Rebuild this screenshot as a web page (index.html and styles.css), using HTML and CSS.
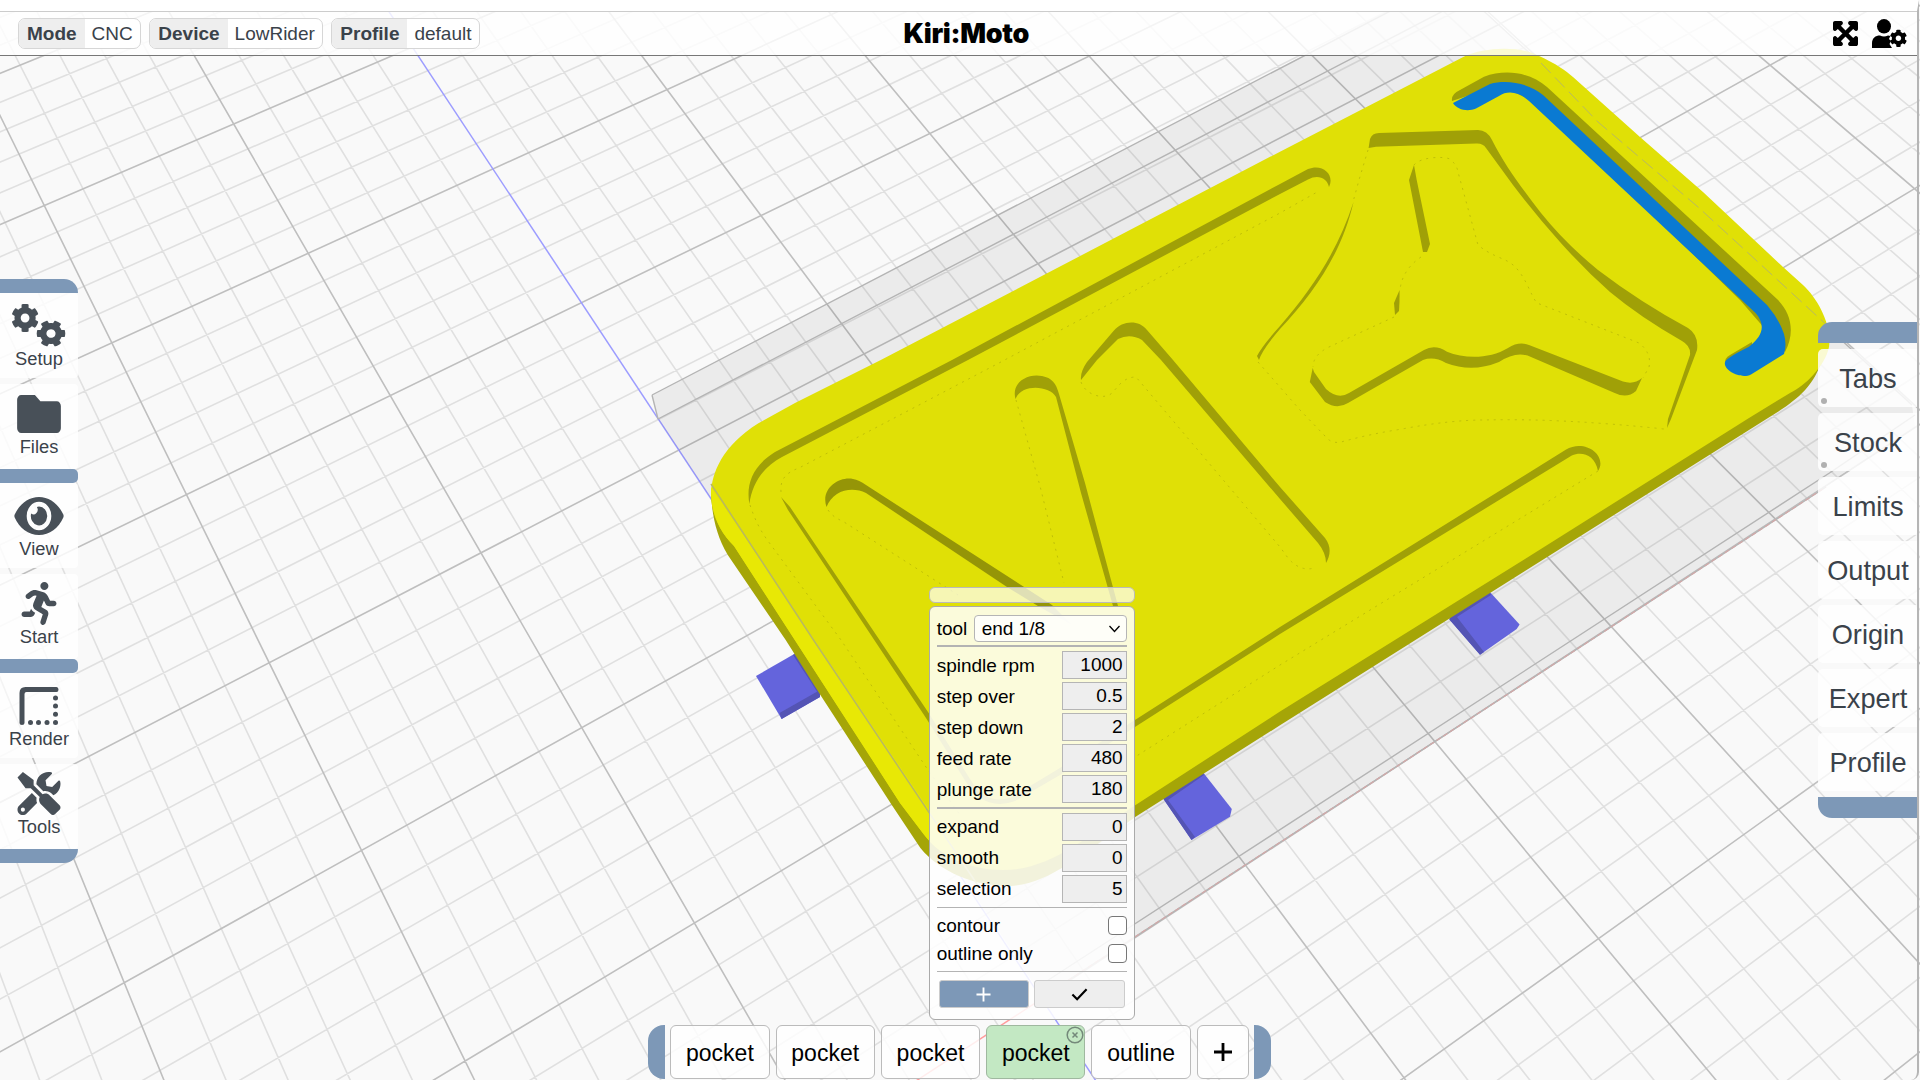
FILE: index.html
```html
<!DOCTYPE html>
<html lang="en">
<head>
<meta charset="utf-8">
<title>Kiri:Moto</title>
<link rel="stylesheet" href="styles.css">
</head>
<body>
<svg class="defs" aria-hidden="true">
  <defs>
    <path id="cog" d="M487.4 315.7l-42.6-24.6c4.3-23.2 4.3-47 0-70.2l42.6-24.6c4.9-2.8 7.1-8.6 5.5-14-11.1-35.6-30-67.8-54.7-94.6-3.8-4.1-10-5.1-14.8-2.3L380.8 110c-17.9-15.4-38.5-27.3-60.8-35.1V25.8c0-5.6-3.9-10.5-9.4-11.7-36.7-8.2-74.3-7.8-109.2 0-5.5 1.2-9.4 6.1-9.4 11.7V75c-22.2 7.9-42.8 19.8-60.8 35.1L88.7 85.5c-4.9-2.8-11-1.9-14.8 2.3-24.7 26.7-43.6 58.9-54.7 94.6-1.7 5.4.6 11.2 5.5 14L67.3 221c-4.3 23.2-4.3 47 0 70.2l-42.6 24.6c-4.9 2.8-7.1 8.6-5.5 14 11.1 35.6 30 67.8 54.7 94.6 3.8 4.1 10 5.1 14.8 2.3l42.6-24.6c17.9 15.4 38.5 27.3 60.8 35.1v49.2c0 5.6 3.9 10.5 9.4 11.7 36.7 8.2 74.3 7.8 109.2 0 5.5-1.2 9.4-6.1 9.4-11.7v-49.2c22.2-7.9 42.8-19.8 60.8-35.1l42.6 24.6c4.9 2.8 11 1.9 14.8-2.3 24.7-26.7 43.6-58.9 54.7-94.6 1.5-5.5-.7-11.3-5.6-14.1zM256 336c-44.1 0-80-35.9-80-80s35.9-80 80-80 80 35.9 80 80-35.9 80-80 80z"/>
  </defs>
</svg>

<svg class="scene" viewBox="0 0 1920 1080">
  <g id="grid">
    <path id="grid-minor" class="grid-minor"/>
    <path id="grid-major" class="grid-major"/>
    <path id="axis-y" class="axis-y"/>
    <path id="axis-x" class="axis-x"/>
  </g>

  <g class="stock">
    <path class="stock-fill" d="M652 395L1450 -20L1912 405L1915 427L1043 998L658 419Z"/>
    <path class="stock-edge" d="M658 419L1470 -3M652 395L658 419M652 395L1450 -20L1912 405M1043.7 983L1831 472L1915 415M1041 998L1826 487"/>
    <path class="stock-front" d="M1041 998L1826 487"/>
  </g>

  <g class="tab">
    <path d="M796 653L820 690L820 697L781.6 719L756 676Z"/>
    <path d="M1202 771L1231.800 809L1230 816.700L1191.500 840L1162.800 798Z"/>
    <path d="M1489 591L1519.600 624.400L1516.700 629L1480 654.700L1449.400 619.600Z"/>
  </g>
  <g class="tab-side">
    <path d="M820 690L820 697L781.600 719L779.500 713Z"/>
    <path d="M796 653L820 690L818 693L793 655Z"/>
    <path d="M1163 794L1202 771L1204 775L1168 800L1195 837L1191.500 840L1162.800 798Z"/>
    <path d="M1449.400 617L1489 591L1491 595L1457 617L1484 652L1480 654.700L1449.400 619.600Z"/>
  </g>

  <path class="side" d="M711 493C712 515 716 535 727.800 555L785.700 640L820.400 695L891.800 805L920.400 848C940 872 975 886 1006 886C1045 886 1075 860 1135.600 816.700L1280 725.300L1525 571L1776 413C1800 398 1812 385 1819 368L1825 350L1400 100Z"/>
  <path class="top" d="M711 493C712 473 722 446 758.400 423.300L795 403L880.800 360L1280 151.700L1463.700 56.700C1485 47 1518 46 1537 55C1557 64 1566 71 1573 77L1640 137L1703 192L1783 267L1803 285C1818 299 1832 325 1829 347C1825 366 1805 386 1790 393L1749 418L1525 559L1280 711.500L1135.600 805C1085 838 1050 870 1003 870C965 870 938 853 922 832L900 803L870 756L734 546C718 530 711 512 711 493Z"/>
  <path class="lip" d="M711 487L965 863C945 857 932 846 922 832L900 803L734 546C718 530 711 512 711 487Z"/>

  <g class="edge-lines">
    <path class="stock-line" d="M711 484L813.500 640L985 896"/>
    <path class="stock-line thin-dash" d="M1541 63L1598 122L1698 207L1830 328"/>
  </g>

  <g class="hidden-edges">
    <path d="M781 492C780 480 785 473 799 468L999 363L1280 213L1319 191"/>
    <path d="M750 505C755 520 760 530 768 541L841 640L928 770L960 815"/>
    <path d="M1598 471L1280 665L1135 757"/>
    <path d="M828 510C833 517 838 519 844 522L958 595"/>
    <path d="M1016 400L1040 486L1064 583"/>
    <path d="M1081 382C1086 396 1105 400 1112 393L1121 383Q1128 377 1136 377L1280 547L1288 558Q1300 572 1314 568"/>
    <path d="M1368 150L1359 180L1353 202"/>
    <path d="M1258 362L1300 410L1325 436Q1331 444 1341 442Q1370 434 1402 429Q1450 420 1484 420Q1560 418 1664 429"/>
    <path d="M1414 165C1420 157 1443 156 1450 159Q1457 165 1458 172L1478 245C1490 255 1500 257 1509 262C1525 272 1530 295 1537 303L1639 343Q1652 353 1649 367L1643 378"/>
    <path d="M1421 257Q1402 270 1400 290M1394 317L1329 347Q1313 355 1313 367"/>
  </g>

  <g class="wall">
    <path d="M749.400 504C746 485 752 466 775 452L952 360L1280 184L1308 169C1323 163 1335 175 1329 187C1327 178 1318 174 1308 179.500L1280 194L968 360L782 457C762 468 752 484 749.400 504Z"/>
    <path d="M781 497L790 507L928 712L970 779Q985 805 1010 798L1060 768L1280 627L1565.700 449.800C1585 438 1608 456 1598 471C1595 455 1582 451 1571.800 455.600L1280 634L1060 775L1015 801Q985 812 966 782L926 718L788 510Z"/>
    <path d="M1015.500 399C1011 383 1027 373 1042 376C1052 378 1056 383 1059 394L1085 483L1118 606L1113 606L1081 493L1056 397C1050 386 1022 383 1015.500 399Z"/>
    <path d="M1081 380Q1080 372 1087 362L1113.500 331C1123 320 1139 320 1147 330L1173 360L1280 487L1325 538C1332 547 1330 556 1326 563Q1326 553 1318 543L1280 499L1161 360L1142 340Q1130 333 1118 339L1097 360Z"/>
    <path d="M1368.600 148L1370 139Q1372 133 1379 133L1478 130Q1487 130 1492 140C1505 166 1522 188 1541 213Q1565 243 1598 270Q1640 302 1688 328Q1699 335 1697 350L1671 419L1667 428L1668 419L1690 355Q1691 346 1682 341Q1640 317 1610 292Q1585 270 1560 242Q1535 214 1513 185L1486 148Q1483 143 1476 143.500L1376 146.700Z"/>
    <path d="M1353.500 202C1342 252 1315 292 1280 329Q1262 350 1259 360L1257 356Q1262 346 1280 326C1313 288 1338 250 1353.500 202Z"/>
    <path d="M1414 165L1409 180L1423 252L1427 252L1430 244L1416.700 180Z"/>
    <path d="M1399.600 290L1394 303L1395 315L1399 311L1399.500 302Z"/>
    <path d="M1312.700 368L1309.800 382L1325 402Q1337 410 1348 403L1423 360Q1434 356 1446 363Q1472 373 1499 362Q1517 350 1531 357L1614.700 393Q1627 399 1636 391L1642 378Q1634 385 1623 381.500L1529 345Q1519 341 1508 348C1490 359 1465 359 1447 351.700Q1435 344 1424 350L1349 393Q1338 400 1326 389L1314 372Z"/>
    <path d="M1452 101Q1451 94 1460 90L1484 76.700C1505 69 1530 72 1547 87L1777 299C1792 314 1795 333 1785 352L1740 300L1540 105L1500 85Z"/>
    <path d="M1725.500 364Q1724 358 1730 355L1752 342L1752 352Z"/>
  </g>
  <path class="wall-deep" d="M826.500 507C820 488 840 476 853 479Q859 480 866 485L1052 605L1072 625L1038 606L1007 587L866 493C852 486 833 490 826.500 507Z"/>
  <path class="selected-face" d="M1453 103L1490 84C1508 79 1530 84 1543 95L1767 305Q1779 319 1784 334Q1787 345 1784 354L1751 374.500C1740 380 1721 369 1725.500 361Q1728 357 1749 346.700C1763 336 1766 325 1755.500 313L1529 101C1519 92 1508 90 1499 96L1476 108.500C1468 112 1457 110 1453 103Z"/>
</svg>

<div class="app">
  <header class="topbar">
    <div class="settings">
      <div class="pill"><b class="pill-label">Mode</b><span class="pill-value">CNC</span></div>
      <div class="pill"><b class="pill-label">Device</b><span class="pill-value">LowRider</span></div>
      <div class="pill"><b class="pill-label">Profile</b><span class="pill-value">default</span></div>
    </div>
    <h1 class="brand">Kiri:Moto</h1>
    <div class="actions">
      <svg class="icon-expand" viewBox="-14 18 476 476" preserveAspectRatio="none"><path d="M448 344v112a23.940 23.940 0 0 1-24 24H312c-21.390 0-32.090-25.900-17-41l36.200-36.200L224 295.600 116.770 402.900 153 439c15.090 15.100 4.390 41-17 41H24a23.940 23.940 0 0 1-24-24V344c0-21.400 25.890-32.100 41-17l36.190 36.200L184.460 256 77.180 148.700 41 185c-15.100 15.100-41 4.400-41-17V56a23.940 23.940 0 0 1 24-24h112c21.390 0 32.090 25.900 17 41l-36.200 36.200L224 216.400l107.230-107.300L295 73c-15.090-15.100-4.390-41 17-41h112a23.940 23.940 0 0 1 24 24v112c0 21.400-25.890 32.100-41 17l-36.190-36.200L263.540 256l107.280 107.300L407 327.100c15.100-15.200 41-4.500 41 16.900z"/></svg>
      <svg class="icon-user" viewBox="0 0 35 29">
        <ellipse cx="12" cy="7.300" rx="7" ry="7.200"/>
        <path d="M0 29V24.500C0 19 3.500 16.500 8 16.500Q12 18.300 16 16.500Q17.500 16.500 18.300 17L17 20L19 22L17.500 25L20 29Z"/>
        <g transform="translate(17.600 10.500) scale(.0345)"><use href="#cog"/></g>
      </svg>
    </div>
  </header>

  <main class="workspace">
    <nav class="menu menu-left">
      <i class="rail rail-top"></i>
      <a class="tool"><svg viewBox="0 0 54 43"><g transform="translate(-1 -.5) scale(.055 .0565)"><use href="#cog"/></g><g transform="translate(39 29.500) scale(1.020 .96) rotate(30) scale(.0565) translate(-256 -256)"><use href="#cog"/></g></svg>Setup</a>
      <a class="tool"><svg class="wide" viewBox="-60 64 632 384" preserveAspectRatio="none"><path d="M464 128H272l-64-64H48C21.490 64 0 85.490 0 112v288c0 26.510 21.490 48 48 48h416c26.510 0 48-21.490 48-48V176c0-26.510-21.490-48-48-48z"/></svg>Files</a>
      <i class="rail"></i>
      <a class="tool"><svg class="wide" viewBox="-28 64 632 384" preserveAspectRatio="none"><path d="M572.520 241.400C518.290 135.590 410.930 64 288 64S57.680 135.640 3.480 241.410a32.350 32.350 0 0 0 0 29.190C57.710 376.410 165.070 448 288 448s230.320-71.640 284.520-177.410a32.350 32.350 0 0 0 0-29.190zM288 400a144 144 0 1 1 144-144 143.930 143.930 0 0 1-144 144zm0-240a95.310 95.310 0 0 0-25.310 3.790 47.850 47.850 0 0 1-66.900 66.900A95.780 95.780 0 1 0 288 160z"/></svg>View</a>
      <a class="tool"><svg viewBox="0 0 416 512"><path d="M272 96c26.510 0 48-21.490 48-48S298.510 0 272 0s-48 21.490-48 48 21.490 48 48 48zM113.690 317.470l-14.800 34.520H32c-17.670 0-32 14.330-32 32s14.330 32 32 32h77.450c19.250 0 36.580-11.440 44.110-29.090l8.790-20.520-10.670-6.300c-17.320-10.230-30.060-25.370-37.990-42.610zM384 223.990h-44.030l-26.060-53.250c-12.500-25.550-35.450-44.230-61.780-50.940l-71.080-21.140c-28.300-6.800-57.770-.55-80.840 17.140l-39.670 30.410c-14.030 10.750-16.690 30.830-5.940 44.860s30.840 16.690 44.860 5.940l39.670-30.410c7.670-5.890 17.440-8 25.270-6.140l14.700 4.370-37.460 87.390c-12.620 29.480-1.310 64.010 26.300 80.310l84.980 50.170-27.470 87.730c-5.280 16.860 4.110 34.820 20.970 40.090 3.190 1 6.410 1.480 9.580 1.480 13.610 0 26.230-8.770 30.520-22.450l31.640-101.060c5.910-20.770-2.890-43.080-21.640-54.390l-61.240-36.140 31.310-78.280 20.270 41.430c8 16.340 24.920 26.890 43.110 26.890H384c17.670 0 32-14.330 32-32s-14.330-31.990-32-31.990z"/></svg>Start</a>
      <i class="rail"></i>
      <a class="tool"><svg class="wide" viewBox="0 0 39 38"><path d="M0 36V6Q0 0 6 0H37Q39 0 39 2.500T37 5H7Q5 5 5 7V36Q5 38 2.500 38T0 36Z"/><g><circle cx="11" cy="35.500" r="2.500"/><circle cx="19" cy="35.500" r="2.500"/><circle cx="27.500" cy="35.500" r="2.500"/><circle cx="36" cy="35.500" r="2.500"/><circle cx="36" cy="27.300" r="2.500"/><circle cx="36" cy="19" r="2.500"/><circle cx="36" cy="11" r="2.500"/></g></svg>Render</a>
      <a class="tool"><svg viewBox="0 0 512 512"><path d="M501.100 395.700L384 278.600c-23.100-23.100-57.600-27.600-85.400-13.900L192 158.100V96L64 0 0 64l96 128h62.100l106.600 106.600c-13.600 27.800-9.200 62.300 13.900 85.400l117.100 117.100c14.600 14.600 38.200 14.600 52.700 0l52.700-52.700c14.500-14.600 14.500-38.200 0-52.700zM331.700 225c28.300 0 54.900 11 74.900 31l19.400 19.400c15.800-6.900 30.800-16.500 43.800-29.500 37.100-37.100 49.700-89.300 37.900-136.700-2.200-9-13.500-12.100-20.100-5.500l-74.400 74.400-67.900-11.300L334 98.900l74.400-74.400c6.600-6.600 3.400-17.900-5.700-20.200-47.400-11.700-99.600.9-136.600 37.900-28.500 28.500-41.900 66.100-41.200 103.600l82.100 82.100c8.100-1.900 16.500-2.900 24.700-2.900zm-103.900 82l-56.700-56.700L18.700 402.800c-25 25-25 65.500 0 90.500s65.500 25 90.500 0l123.600-123.600c-7.600-19.900-9.900-41.600-5-62.700zM64 472c-13.200 0-24-10.800-24-24 0-13.300 10.700-24 24-24s24 10.700 24 24c0 13.200-10.700 24-24 24z"/></svg>Tools</a>
      <i class="rail rail-bottom"></i>
    </nav>

    <section class="ops">
      <i class="cap cap-left"></i>
      <div class="op">pocket</div>
      <div class="op">pocket</div>
      <div class="op">pocket</div>
      <div class="op active">pocket
        <svg class="op-close" viewBox="0 0 18 18"><circle cx="9" cy="9" r="7.800"/><path d="M6.500 6.500l5 5m0-5l-5 5"/></svg>
        <div class="popup">
          <div class="grip"></div>
          <form class="panel">
            <div class="row row-tool"><label>tool</label><div class="select">end 1/8<svg viewBox="0 0 12 8"><path d="M1 1l5 5.500L11 1"/></svg></div></div>
            <hr class="first">
            <div class="row"><label>spindle rpm</label><span class="num">1000</span></div>
            <div class="row"><label>step over</label><span class="num">0.5</span></div>
            <div class="row"><label>step down</label><span class="num">2</span></div>
            <div class="row"><label>feed rate</label><span class="num">480</span></div>
            <div class="row"><label>plunge rate</label><span class="num">180</span></div>
            <hr>
            <div class="row"><label>expand</label><span class="num">0</span></div>
            <div class="row"><label>smooth</label><span class="num">0</span></div>
            <div class="row"><label>selection</label><span class="num">5</span></div>
            <hr>
            <div class="row row-check"><label>contour</label><span class="check"></span></div>
            <div class="row row-check"><label>outline only</label><span class="check"></span></div>
            <hr>
            <div class="buttons">
              <div class="btn btn-add"><svg viewBox="0 0 16 16"><path d="M8 .5v15M.5 8h15"/></svg></div>
              <div class="btn"><svg viewBox="0 0 18 14"><path d="M1.500 7l5 5L16.500 1.500"/></svg></div>
            </div>
          </form>
        </div>
      </div>
      <div class="op">outline</div>
      <div class="op op-add"><svg viewBox="0 0 18 18"><path d="M9 0v18M0 9h18"/></svg></div>
      <i class="cap cap-right"></i>
    </section>

    <nav class="menu menu-right">
      <i class="rail rail-top"></i>
      <a class="tab-item pinned">Tabs</a>
      <a class="tab-item pinned">Stock</a>
      <a class="tab-item">Limits</a>
      <a class="tab-item">Output</a>
      <a class="tab-item">Origin</a>
      <a class="tab-item">Expert</a>
      <a class="tab-item">Profile</a>
      <i class="rail rail-bottom"></i>
    </nav>
  </main>
</div>
<script src="grid.js"></script>
</body>
</html>
```

FILE: styles.css
```css
* { box-sizing: border-box; }

body {
  margin: 0;
  width: 1920px;
  height: 1080px;
  overflow: hidden;
  position: relative;
  background: #f9f9f9;
  font-family: "Liberation Sans", Arial, sans-serif;
  color: #3a424a;
}

.defs { position: absolute; width: 0; height: 0; }

/* 3D view */
.scene { position: absolute; inset: 0; width: 1920px; height: 1080px; }
.grid-minor { fill: none; stroke: #e0e0e0; stroke-width: 1.6; }
.grid-major { fill: none; stroke: #bfbfbf; stroke-width: 1.6; }
.axis-y { fill: none; stroke: #9c9cff; stroke-width: 1.5; }
.axis-x { fill: none; stroke: #ff9c9c; stroke-width: 1.5; }
.stock-fill { fill: rgba(0, 0, 0, .055); }
.stock-edge { fill: none; stroke: #b4b4b4; stroke-width: 1.4; }
.stock-front { fill: none; stroke: #d4a8a8; stroke-width: 1.2; stroke-dasharray: 5 3; }
.tab { fill: #6464dc; }
.tab-side { fill: #5454b4; }
.side { fill: #a5a507; }
.top { fill: #e0e006; }
.lip { fill: #e8e805; }
.stock-line { fill: none; stroke: #b9b960; stroke-width: 1.5; }
.thin-dash { stroke-width: 1; stroke-dasharray: 14 6; }
.hidden-edges { fill: none; stroke: #c0c006; stroke-width: 1; stroke-dasharray: 2 5; }
.wall { fill: #a0a007; }
.wall-deep { fill: #959507; }
.selected-face { fill: #0a7ad2; }

/* shell */
.app {
  position: relative;
  height: 1080px;
  width: 1919px;
  display: flex;
  flex-direction: column;
  border-top: 11px solid #fff;
  border-right: 2px solid #b5b5b5;
  border-bottom-right-radius: 8px;
}

.topbar {
  height: 45px;
  flex: none;
  display: grid;
  grid-template-columns: 1fr auto 1fr;
  align-items: center;
  padding: 0 10px 0 18px;
  background: rgba(255, 255, 255, .82);
  border-top: 1px solid #ccc;
  border-bottom: 1px solid #777;
}
.settings { display: flex; gap: 8.500px; font-size: 19px; line-height: 29px; }
.pill { display: flex; border: 1px solid #d6d6d6; border-radius: 7px; overflow: hidden; background: #fff; }
.pill-label { padding: 0 8px; background: #eee; }
.pill-value { padding: 0 7px 0 7px; }
.brand {
  margin: 0 0 0 4px;
  width: 122px;
  color: #000;
  font: 900 27px/40px Inter, sans-serif;
  letter-spacing: -.3px;
  white-space: nowrap;
}
.actions { display: flex; justify-content: flex-end; align-items: center; gap: 14px; }
.icon-expand { width: 25px; height: 25px; stroke: #000; stroke-width: 28; }
.icon-user { width: 35px; height: 29px; }

.workspace { flex: 1; display: flex; justify-content: space-between; align-items: flex-start; }

.rail { display: block; height: 14px; background: #7d98b7; border-radius: 0 5px 5px 0; }
.menu { display: flex; flex-direction: column; }

.menu-left { width: 78px; margin-top: 223px; }
.menu-left .rail-top { border-radius: 0 15px 0 0; }
.menu-left .rail-bottom { border-radius: 0 0 15px 0; }
.tool {
  height: 85px;
  display: flex;
  flex-direction: column;
  align-items: center;
  justify-content: flex-end;
  padding-bottom: 9px;
  gap: 3px;
  font-size: 18.300px;
  line-height: 21px;
  background: rgba(255, 255, 255, .82);
  border-radius: 0 4px 4px 0;
}
.tool svg { width: 54px; height: 43px; fill: #485058; margin-bottom: -2px; }
.tool .wide { height: 38px; margin-bottom: 0; }
.tool + .tool { margin-top: 6px; padding-bottom: 12px; }

.menu-right { width: 99px; margin-top: 266px; gap: 6px; }
.menu-right .rail { height: 21px; }
.menu-right .rail-top { border-radius: 14px 0 0 0; }
.menu-right .rail-bottom { border-radius: 0 0 0 14px; }
.tab-item {
  height: 58px;
  padding-left: 1px;
  line-height: 60px;
  text-align: center;
  font-size: 27.200px;
  background: rgba(255, 255, 255, .82);
  border-radius: 5px 0 0 5px;
  position: relative;
}
.pinned::after {
  content: "";
  position: absolute;
  left: 3px;
  bottom: 3px;
  width: 6px;
  height: 6px;
  border-radius: 50%;
  background: #b0b0b0;
}

/* operation strip */
.ops { align-self: flex-end; display: flex; gap: 6px; height: 54px; margin: 0 0 1px 23px; color: #000; }
.cap { width: 17px; background: #7d98b7; }
.cap-left { border-radius: 16px 0 0 16px; margin-right: -1px; }
.cap-right { border-radius: 0 16px 16px 0; margin-left: -1px; }
.op {
  width: 99.300px;
  font-size: 23px;
  line-height: 54px;
  text-align: center;
  background: rgba(255, 255, 255, .82);
  border: 1.500px solid #bbb;
  border-radius: 6px;
  position: relative;
}
.op-add { width: 52px; display: flex; align-items: center; justify-content: center; }
.op-add svg { width: 18px; height: 18px; stroke: #000; stroke-width: 2.800; }
.active { background: #c3e8c3; border-color: #9fb89f; }
.op-close { position: absolute; right: 0; top: 0; width: 18px; height: 18px; fill: none; stroke: #74897a; stroke-width: 1.500; }

.popup {
  position: absolute;
  left: -58.500px;
  bottom: 58px;
  width: 206px;
  text-align: left;
  font-size: 19px;
}
.grip { height: 16px; margin-bottom: 3px; border: 1.500px solid #bbb; border-radius: 6px; background: rgba(255, 255, 255, .7); }
.panel {
  height: 414px;
  padding: 8px 7px 0;
  border: 1.500px solid #aaa;
  border-radius: 6px;
  background: rgba(255, 255, 255, .86);
}
.row { display: flex; justify-content: space-between; align-items: center; height: 28px; line-height: 29px; margin-bottom: 3px; }
.row-tool { margin-bottom: 3px; height: 27px; }
.select {
  width: 153px;
  height: 27px;
  padding: 0 5px 0 7px;
  display: flex;
  align-items: center;
  justify-content: space-between;
  border: 1px solid #b5b5b5;
  border-radius: 4px;
  background: rgba(255, 255, 255, .8);
}
.select svg { width: 13px; height: 8px; fill: none; stroke: #000; stroke-width: 1.300; }
.panel hr { margin: 4px 0; border: 0; height: 1.500px; background: #b3b3b3; }
.panel .first { margin: 0 0 4.500px; }
.num {
  width: 65px;
  height: 28px;
  line-height: 25px;
  padding-right: 3px;
  text-align: right;
  border: 1.500px solid #b5b5b5;
  background: #eee;
}
.row-check { height: 19px; margin: 8px 0 7.500px; }
.row-check + .row-check { margin-top: 9px; }
.check { width: 19px; height: 19px; border: 1.500px solid #777; border-radius: 4px; background: #fff; }
.buttons { display: flex; gap: 5px; padding: 4px 2px 0; }
.btn { flex: 1; height: 28px; display: flex; align-items: center; justify-content: center; background: #eee; border: 1px solid #ccc; border-radius: 3px; }
.btn svg { width: 17px; height: 15px; fill: none; stroke: #000; stroke-width: 2.300; }
.btn-add { background: #7d98b7; }
.btn-add svg { stroke: #fff; stroke-width: 2; }
```

FILE: grid.js
```js
// Ground plane calibration: [u, v, screen x, screen y], one unit = one major cell.
const calibration = [
  [-2, 6, 44, 205.3], [-2, 5, 112.7, 343], [-2, 4, 186.7, 494.5], [-2, 3, 269.3, 662.5],
  [-2, 2, 361.2, 850], [-2, 1, 465.3, 1061.7], [-1, 6, 233.5, 124], [-1, 5, 308.2, 253.3],
  [-1, 2, 581.6, 727.3], [-1, 1, 695, 923.3], [0, 5, 493, 169.3], [0, 4, 580.4, 303.3],
  [1, 5, 666.5, 89.3], [1, 4, 760.8, 215], [2, 4, 929.8, 133.3], [3, 4, 1089, 56.7],
  [1, 3, 864.5, 354], [2, 3, 1038.8, 263.3], [3, 3, 1202.4, 179],
  [1, 0, 1243.8, 865.7], [2, 0, 1435, 741.5], [3, 0, 1610.6, 626], [4, 0, 1774.7, 518.7],
  [2, -1, 1599.5, 938.3], [3, -1, 1778.9, 810]
];

// Least-squares fit of the eight projection coefficients.
function fitProjection(points) {
  const m = Array.from({ length: 8 }, () => new Array(9).fill(0));
  const add = (row, value) => {
    for (let i = 0; i < 8; i++) {
      for (let j = 0; j < 8; j++) m[i][j] += row[i] * row[j];
      m[i][8] += row[i] * value;
    }
  };
  for (const [u, v, px, py] of points) {
    const x = px / 1000, y = py / 1000;
    add([u, v, 1, 0, 0, 0, -u * x, -v * x], x);
    add([0, 0, 0, u, v, 1, -u * y, -v * y], y);
  }
  for (let c = 0; c < 8; c++) {
    let p = c;
    for (let r = c + 1; r < 8; r++) if (Math.abs(m[r][c]) > Math.abs(m[p][c])) p = r;
    [m[c], m[p]] = [m[p], m[c]];
    for (let r = 0; r < 8; r++) {
      if (r === c) continue;
      const f = m[r][c] / m[c][c];
      for (let k = c; k < 9; k++) m[r][k] -= f * m[c][k];
    }
  }
  return m.map((row, i) => row[8] / row[i]);
}

const h = fitProjection(calibration);
const project = (u, v) => {
  const w = h[6] * u + h[7] * v + 1;
  return ((h[0] * u + h[1] * v + h[2]) / w * 1000).toFixed(1) + " " +
         ((h[3] * u + h[4] * v + h[5]) / w * 1000).toFixed(1);
};

const line = (a, b) => "M" + project(...a) + "L" + project(...b);
let minor = "", major = "";
for (let i = -40; i <= 50; i++) {
  const t = i / 5;
  const isMajor = i % 5 === 0;
  let d = "";
  if (i !== 0) d += line([t, -2.4], [t, 9]);
  if (i >= -12 && i !== 0) d += line([-5, t], [9, t]);
  if (i === 0) d += line([0, 0], [9, 0]);
  if (isMajor) major += d; else minor += d;
}
document.getElementById("grid-minor").setAttribute("d", minor);
document.getElementById("grid-major").setAttribute("d", major);
document.getElementById("axis-y").setAttribute("d", line([0, -2.4], [0, 9]));
document.getElementById("axis-x").setAttribute("d", line([-5, 0], [0, 0]));
```
